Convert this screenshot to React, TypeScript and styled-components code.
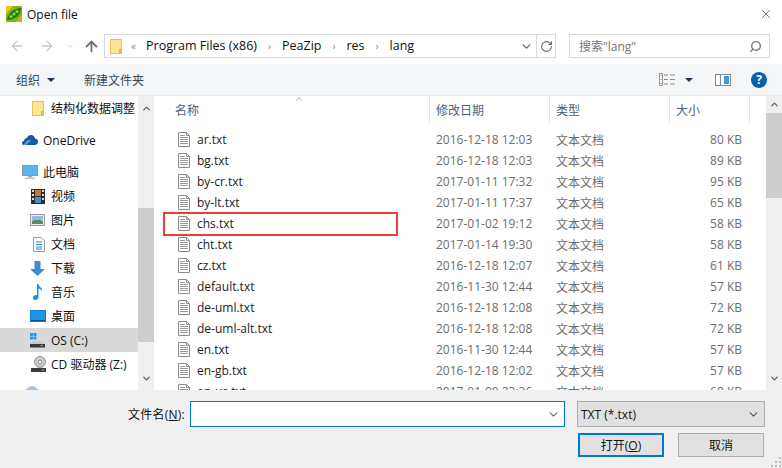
import React from 'react';
import styled, { createGlobalStyle } from 'styled-components';
import {
  ArrowLeft,
  ArrowRight,
  ArrowUp,
  ChevronDown,
  ChevronUp,
  RotateCw,
  Search,
  X,
} from 'lucide-react';

const GlobalStyle = createGlobalStyle`
  html, body {
    margin: 0;
    padding: 0;
    background: #fff;
  }
  * {
    box-sizing: border-box;
  }
`;

const FONT = `"Open Sans", "Noto Sans CJK SC", sans-serif`;

const Window = styled.div`
  width: 782px;
  height: 468px;
  display: flex;
  flex-direction: column;
  overflow: hidden;
  background: #fff;
  font-family: ${FONT};
  font-size: 12px;
  color: #111;
`;

const TitleBar = styled.div`
  height: 28px;
  flex: none;
  display: flex;
  align-items: center;
  padding: 0 9px 0 6px;
  gap: 5px;
`;

const TitleText = styled.span`
  flex: 1;
  font-size: 12px;
`;

const NavBar = styled.div`
  height: 36px;
  flex: none;
  display: flex;
  align-items: center;
  padding: 6px 13px 6px 0;
`;

const NavIcons = styled.div`
  width: 104px;
  flex: none;
  display: flex;
  align-items: center;
`;

const NavSlot = styled.span<{ $width: number; $color: string }>`
  width: ${({ $width }) => $width}px;
  display: flex;
  justify-content: center;
  color: ${({ $color }) => $color};
`;

const AddressBox = styled.div`
  width: 452px;
  height: 24px;
  flex: none;
  display: flex;
  align-items: center;
  border: 1px solid #d9d9d9;
  padding-left: 5px;
`;

const Crumbs = styled.div`
  flex: 1;
  display: flex;
  align-items: center;
  min-width: 0;
  padding-left: 7px;
  gap: 8px;
  font-size: 12.5px;
  margin-top: -1px;
`;

const CrumbSep = styled.span`
  color: #8a8a8a;
  font-size: 10px;
  width: 9px;
  text-align: center;
`;

const AddressDrop = styled.span`
  width: 20px;
  display: flex;
  justify-content: center;
  color: #6a6a6a;
`;

const RefreshBtn = styled.span`
  width: 19px;
  height: 100%;
  display: flex;
  align-items: center;
  justify-content: center;
  border-left: 1px solid #d9d9d9;
  color: #6a6a6a;
`;

const SearchBox = styled.div`
  margin-left: 13px;
  width: 201px;
  height: 24px;
  flex: none;
  display: flex;
  align-items: center;
  justify-content: space-between;
  border: 1px solid #d9d9d9;
  padding: 0 7px 0 9px;
  color: #767676;
`;

const SearchGlass = styled(Search)`
  transform: scaleX(-1);
`;

const Toolbar = styled.div`
  height: 32px;
  flex: none;
  display: flex;
  align-items: center;
  background: #f5f6f7;
  border-bottom: 1px solid #e8e9ea;
  padding: 0 15px 0 16px;
  color: #33475b;
`;

const ToolItem = styled.span`
  display: flex;
  align-items: center;
  gap: 7px;
  margin-right: 29px;
`;

const Caret = styled.span`
  width: 0;
  height: 0;
  border-left: 4px solid transparent;
  border-right: 4px solid transparent;
  border-top: 4px solid #1d3557;
`;

const ViewCaret = styled(Caret)`
  margin: 0 22px 0 10px;
`;

const ToolRight = styled.div`
  margin-left: auto;
  display: flex;
  align-items: center;
`;

const HelpBadge = styled.span`
  width: 16px;
  height: 16px;
  margin-left: 20px;
  border-radius: 50%;
  background: #0a5fb4;
  color: #fff;
  font-weight: 700;
  font-size: 12px;
  display: flex;
  align-items: center;
  justify-content: center;
`;

const Main = styled.div`
  height: 294px;
  flex: none;
  display: flex;
  overflow: hidden;
`;

const Sidebar = styled.div`
  width: 138px;
  flex: none;
  display: flex;
  flex-direction: column;
  overflow: hidden;
`;

const SideItem = styled.div<{ $indent: number; $gap?: number; $active?: boolean }>`
  height: 24px;
  flex: none;
  display: flex;
  align-items: center;
  white-space: nowrap;
  padding-left: ${({ $indent }) => $indent}px;
  margin-top: ${({ $gap }) => $gap ?? 0}px;
  background: ${({ $active }) => ($active ? '#d9d9d9' : 'transparent')};
`;

const SideIcon = styled.span<{ $width: number }>`
  width: ${({ $width }) => $width}px;
  flex: none;
  display: flex;
`;

const ScrollBar = styled.div<{ $width: number }>`
  width: ${({ $width }) => $width}px;
  flex: none;
  background: #f0f0f0;
  display: flex;
  flex-direction: column;
  align-items: center;
  color: #606060;
`;

const ScrollBtn = styled.span<{ $height: number }>`
  height: ${({ $height }) => $height}px;
  flex: none;
  display: flex;
  align-items: center;
  justify-content: center;
`;

const ScrollThumb = styled.div<{ $top: number; $height: number }>`
  width: 100%;
  flex: none;
  height: ${({ $height }) => $height}px;
  margin-top: ${({ $top }) => $top}px;
  background: #cdcdcd;
`;

const ScrollFill = styled.div`
  flex: 1;
`;

const Splitter = styled.div`
  width: 2px;
  flex: none;
`;

const ListPane = styled.div`
  position: relative;
  flex: 1;
  min-width: 0;
  overflow: hidden;
`;

const HeaderRow = styled.div`
  height: 27px;
  margin-bottom: 6px;
  display: grid;
  grid-template-columns: 274px 120px 120px 80px;
  color: #4c607a;
`;

const HeaderCell = styled.div<{ $pad: number }>`
  position: relative;
  display: flex;
  align-items: center;
  padding-left: ${({ $pad }) => $pad}px;
  border-right: 1px solid #e5e5e5;
`;

const SortCaret = styled.span`
  position: absolute;
  top: -2px;
  left: 138px;
  color: #777;
  display: flex;
`;

const FileRow = styled.div`
  height: 21px;
  display: grid;
  grid-template-columns: 274px 120px 120px 80px;
  align-items: center;
  color: #6d6d6d;
`;

const NameCell = styled.div`
  display: flex;
  align-items: center;
  padding-left: 22px;
  gap: 7px;
  color: #1c1c1c;
`;

const MetaCell = styled.div`
  padding-left: 6px;
`;

const SizeCell = styled.div`
  text-align: right;
  padding-right: 8px;
`;

const RedMark = styled.div`
  position: absolute;
  left: 7px;
  top: 116px;
  width: 235px;
  height: 24px;
  border: 2px solid #f03a3a;
`;

const Footer = styled.div`
  position: relative;
  flex: 1;
  background: #f0f0f0;
  display: grid;
  grid-template-columns: 190px 375px 200px;
  grid-template-rows: 26px 24px;
  row-gap: 6px;
  padding-top: 11px;
`;

const FileLabel = styled.label`
  display: flex;
  align-items: center;
  justify-content: flex-end;
  padding-right: 5px;
  letter-spacing: 0.25px;
  color: #111;
`;

const Underlined = styled.span`
  text-decoration: underline;
`;

const FileInput = styled.div`
  display: flex;
  align-items: center;
  justify-content: flex-end;
  background: #fff;
  border: 1px solid #0078d7;
  padding-right: 4px;
  color: #666;
`;

const TypeSelect = styled.div`
  margin-left: 12px;
  display: flex;
  align-items: center;
  justify-content: space-between;
  background: #e1e1e1;
  border: 1px solid #adadad;
  padding: 0 4px 0 3px;
  color: #111;
`;

const ButtonRow = styled.div`
  grid-column: 3;
  margin-left: 13px;
  display: flex;
  gap: 14px;
`;

const DialogButton = styled.button<{ $primary?: boolean }>`
  width: 86px;
  height: 24px;
  flex: none;
  padding: 0;
  font-family: ${FONT};
  font-size: 12px;
  color: #111;
  background: #e1e1e1;
  border: ${({ $primary }) => ($primary ? '2px solid #0078d7' : '1px solid #adadad')};
`;

const Grip = styled.svg`
  position: absolute;
  right: 1px;
  bottom: 1px;
`;

const PeaIcon = () => (
  <svg width="16" height="16" viewBox="0 0 16 16">
    <rect width="16" height="16" rx="1" fill="#7fb800" />
    <path d="M0 0h7L0 8z" fill="#f5c518" />
    <path d="M16 16H9l7-8z" fill="#d9a514" />
    <path d="M1 14C2 7 8 2 15 2c0 7-6 12-14 12z" fill="#1f7a1f" />
    <circle cx="5" cy="10.5" r="1.6" fill="#8ccf3f" />
    <circle cx="8" cy="8" r="1.6" fill="#8ccf3f" />
    <circle cx="11" cy="5.5" r="1.6" fill="#8ccf3f" />
  </svg>
);

const FolderIcon = ({ size = 12 }: { size?: number }) => (
  <svg width={size} height={size * 1.25} viewBox="0 0 12 15">
    <rect x="0.5" y="0.5" width="11" height="14" fill="#fde594" stroke="#e6c25a" />
    <rect x="9" y="10" width="3" height="5" fill="#e6b93f" />
  </svg>
);

const CloudIcon = () => (
  <svg width="16" height="10" viewBox="0 0 16 10">
    <path
      d="M1.5 10C.5 10 0 9 0 8c0-1.300.8-2 2-2 .2-2 1.500-3 3-3 .6-1.800 2-3 4-3 2.300 0 3.700 1.500 4 3.500 1.800 0 3 1 3 3 0 2-1.300 3.500-3 3.500z"
      fill="#0f5ca8"
    />
    <path d="M5 5.500c1.500-1 3-.5 4 .5l-5 4H1.500z" fill="#fff" opacity="0.35" />
  </svg>
);

const PcIcon = () => (
  <svg width="16" height="14" viewBox="0 0 16 14">
    <rect x="0.5" y="0.5" width="15" height="10" fill="#5ab6ee" stroke="#8a9aa8" />
    <rect x="6" y="11" width="4" height="1.500" fill="#9aa7b2" />
    <rect x="3" y="12.500" width="10" height="1.500" fill="#b9c4cc" />
  </svg>
);

const VideoIcon = () => (
  <svg width="14" height="15" viewBox="0 0 14 15">
    <rect width="14" height="15" fill="#2c2c2c" />
    <rect x="4" y="1" width="6" height="6" fill="#c9772c" />
    <rect x="4" y="8" width="6" height="6" fill="#3f8fd1" />
    <path d="M1 1h2v2H1zM1 5h2v2H1zM1 9h2v2H1zM11 1h2v2h-2zM11 5h2v2h-2zM11 9h2v2h-2z" fill="#ddd" />
  </svg>
);

const PictureIcon = () => (
  <svg width="15" height="12" viewBox="0 0 15 12">
    <rect x="0.500" y="0.500" width="14" height="11" fill="#e6eef2" stroke="#9a9a9a" />
    <path d="M2 7c3-2 7-2 11 0v3H2z" fill="#5c8a6a" />
    <rect x="2" y="2" width="11" height="4" fill="#8fbfdd" />
  </svg>
);

const DocIcon = () => (
  <svg width="12" height="15" viewBox="0 0 12 15">
    <path d="M.5.500h8l3 3v11H.5z" fill="#fff" stroke="#9a9a9a" />
    <path d="M3 5h6M3 7.500h6M3 10h6M3 12h6" stroke="#2f7fc4" />
  </svg>
);

const DownloadIcon = () => (
  <svg width="15" height="15" viewBox="0 0 15 15">
    <path d="M4.500 0h6v8H15l-7.500 7L0 8h4.500z" fill="#3f8ad8" />
  </svg>
);

const MusicIcon = () => (
  <svg width="12" height="16" viewBox="0 0 12 16">
    <path d="M5 0h1.500c.3 3 4.500 3.500 3.500 7.500C9.500 5.500 8 5 6.500 4.500V13c0 1.700-1.500 3-3.300 3S1 15 1 13.500 2.800 10.800 5 11z" fill="#1e8fe6" />
  </svg>
);

const DesktopIcon = () => (
  <svg width="16" height="12" viewBox="0 0 16 12">
    <rect width="16" height="12" fill="#1279d6" />
    <rect x="1" y="1" width="14" height="9" fill="#1a95ea" />
    <rect x="1" y="10" width="14" height="1" fill="#0d4f8e" />
  </svg>
);

const DriveIcon = () => (
  <svg width="15" height="15" viewBox="0 0 15 15">
    <rect x="0" y="0" width="3" height="3" fill="#1e9be8" />
    <rect x="3.500" y="0" width="3" height="3" fill="#1e9be8" />
    <rect x="0" y="3.500" width="3" height="3" fill="#1e9be8" />
    <rect x="3.500" y="3.500" width="3" height="3" fill="#1e9be8" />
    <path d="M2 8.500h10l2.500 2.500H0z" fill="#c8c8c8" />
    <rect y="11" width="15" height="3.500" fill="#3a3a3a" />
    <rect x="10.500" y="12" width="2.500" height="1" fill="#59d46a" />
  </svg>
);

const CdIcon = () => (
  <svg width="15" height="16" viewBox="0 0 15 16">
    <circle cx="9" cy="6" r="5.500" fill="#c9c9c9" stroke="#9a9a9a" />
    <circle cx="9" cy="6" r="1.800" fill="#fff" stroke="#8a8a8a" />
    <rect y="12" width="15" height="4" fill="#3a3a3a" />
    <rect x="10.500" y="13.500" width="2.500" height="1" fill="#59d46a" />
  </svg>
);

const NetworkIcon = () => (
  <svg width="14" height="20" viewBox="0 0 14 20">
    <circle cx="7" cy="7" r="6.500" fill="#9cc4e4" stroke="#b5c7d6" />
  </svg>
);

const TxtIcon = () => (
  <svg width="12" height="15" viewBox="0 0 12 15">
    <path d="M.5.500h8l3 3v11H.5z" fill="#fff" stroke="#8c8c8c" />
    <path d="M8.500.500v3h3" fill="none" stroke="#8c8c8c" />
    <path d="M2 3.500h5M2 5.500h8M2 7.500h8M2 9.500h8M2 11.500h8" stroke="#9c9c9c" />
  </svg>
);

const ViewIcon = () => (
  <svg width="16" height="13" viewBox="0 0 16 13">
    <rect x="0.500" y="0.500" width="3" height="12" fill="#fff" stroke="#9a9a9a" />
    <rect x="1.500" y="2" width="1" height="1" fill="#3f8ad8" />
    <rect x="1.500" y="6" width="1" height="1" fill="#3f8ad8" />
    <rect x="1.500" y="10" width="1" height="1" fill="#d83f3f" />
    <path d="M5 2h4M11 2h5M5 6.500h4M11 6.500h5M5 11h4M11 11h5" stroke="#8a8a8a" />
  </svg>
);

const PaneIcon = () => (
  <svg width="16" height="12" viewBox="0 0 16 12">
    <rect x="0.500" y="0.500" width="15" height="11" fill="#fff" stroke="#8a8a8a" />
    <rect x="9" y="2" width="5" height="8" fill="#3f97e8" />
    <rect x="5" y="1" width="1" height="10" fill="#8a8a8a" />
  </svg>
);

const SIDEBAR: {
  label: string;
  icon: React.ReactNode;
  indent: number;
  width: number;
  gap?: number;
  active?: boolean;
}[] = [
  { label: '结构化数据调整', icon: <FolderIcon />, indent: 32, width: 19 },
  { label: 'OneDrive', icon: <CloudIcon />, indent: 22, width: 21, gap: 8 },
  { label: '此电脑', icon: <PcIcon />, indent: 22, width: 21, gap: 8 },
  { label: '视频', icon: <VideoIcon />, indent: 31, width: 20 },
  { label: '图片', icon: <PictureIcon />, indent: 30, width: 21 },
  { label: '文档', icon: <DocIcon />, indent: 33, width: 18 },
  { label: '下载', icon: <DownloadIcon />, indent: 30, width: 21 },
  { label: '音乐', icon: <MusicIcon />, indent: 32, width: 19 },
  { label: '桌面', icon: <DesktopIcon />, indent: 30, width: 21 },
  { label: 'OS (C:)', icon: <DriveIcon />, indent: 30, width: 21, active: true },
  { label: 'CD 驱动器 (Z:)', icon: <CdIcon />, indent: 31, width: 20 },
  { label: '', icon: <NetworkIcon />, indent: 25, width: 20, gap: 8 },
];

const FILES = [
  ['ar.txt', '2016-12-18 12:03', '80 KB'],
  ['bg.txt', '2016-12-18 12:03', '89 KB'],
  ['by-cr.txt', '2017-01-11 17:32', '95 KB'],
  ['by-lt.txt', '2017-01-11 17:37', '65 KB'],
  ['chs.txt', '2017-01-02 19:12', '58 KB'],
  ['cht.txt', '2017-01-14 19:30', '58 KB'],
  ['cz.txt', '2016-12-18 12:07', '61 KB'],
  ['default.txt', '2016-11-30 12:44', '57 KB'],
  ['de-uml.txt', '2016-12-18 12:08', '72 KB'],
  ['de-uml-alt.txt', '2016-12-18 12:08', '72 KB'],
  ['en.txt', '2016-11-30 12:44', '57 KB'],
  ['en-gb.txt', '2016-12-18 12:02', '57 KB'],
  ['en-us.txt', '2017-01-09 23:36', '68 KB'],
];

const App = () => (
  <Window>
    <GlobalStyle />
    <TitleBar>
      <PeaIcon />
      <TitleText>Open file</TitleText>
      <X size={14} strokeWidth={1} color="#111" />
    </TitleBar>
    <NavBar>
      <NavIcons>
        <NavSlot $width={34} $color="#c8c8c8">
          <ArrowLeft size={16} />
        </NavSlot>
        <NavSlot $width={26} $color="#c8c8c8">
          <ArrowRight size={16} />
        </NavSlot>
        <NavSlot $width={20} $color="#d0d0d0">
          <ChevronDown size={10} />
        </NavSlot>
        <NavSlot $width={22} $color="#6d6d6d">
          <ArrowUp size={17} strokeWidth={2.5} />
        </NavSlot>
      </NavIcons>
      <AddressBox>
        <FolderIcon />
        <Crumbs>
          <CrumbSep>«</CrumbSep>
          <span>Program Files (x86)</span>
          <CrumbSep>›</CrumbSep>
          <span>PeaZip</span>
          <CrumbSep>›</CrumbSep>
          <span>res</span>
          <CrumbSep>›</CrumbSep>
          <span>lang</span>
        </Crumbs>
        <AddressDrop>
          <ChevronDown size={13} strokeWidth={2.5} />
        </AddressDrop>
        <RefreshBtn>
          <RotateCw size={13} />
        </RefreshBtn>
      </AddressBox>
      <SearchBox>
        <span>搜索"lang"</span>
        <SearchGlass size={13} strokeWidth={2.5} />
      </SearchBox>
    </NavBar>
    <Toolbar>
      <ToolItem>
        组织
        <Caret />
      </ToolItem>
      <ToolItem>新建文件夹</ToolItem>
      <ToolRight>
        <ViewIcon />
        <ViewCaret />
        <PaneIcon />
        <HelpBadge>?</HelpBadge>
      </ToolRight>
    </Toolbar>
    <Main>
      <Sidebar>
        {SIDEBAR.map((item) => (
          <SideItem
            key={item.label || 'network'}
            $indent={item.indent}
            $gap={item.gap}
            $active={item.active}
          >
            <SideIcon $width={item.width}>{item.icon}</SideIcon>
            {item.label}
          </SideItem>
        ))}
      </Sidebar>
      <ScrollBar $width={16}>
        <ScrollBtn $height={24}>
          <ChevronUp size={11} strokeWidth={3} />
        </ScrollBtn>
        <ScrollThumb $top={88} $height={134} />
        <ScrollFill />
        <ScrollBtn $height={24}>
          <ChevronDown size={11} strokeWidth={3} />
        </ScrollBtn>
      </ScrollBar>
      <Splitter />
      <ListPane>
        <HeaderRow>
          <HeaderCell $pad={19}>
            名称
            <SortCaret>
              <ChevronUp size={10} strokeWidth={1.5} />
            </SortCaret>
          </HeaderCell>
          <HeaderCell $pad={6}>修改日期</HeaderCell>
          <HeaderCell $pad={6}>类型</HeaderCell>
          <HeaderCell $pad={6}>大小</HeaderCell>
        </HeaderRow>
        {FILES.map(([name, date, size]) => (
          <FileRow key={name}>
            <NameCell>
              <TxtIcon />
              {name}
            </NameCell>
            <MetaCell>{date}</MetaCell>
            <MetaCell>文本文档</MetaCell>
            <SizeCell>{size}</SizeCell>
          </FileRow>
        ))}
        <RedMark />
      </ListPane>
      <ScrollBar $width={16}>
        <ScrollBtn $height={17}>
          <ChevronUp size={11} strokeWidth={3} />
        </ScrollBtn>
        <ScrollThumb $top={0} $height={85} />
        <ScrollFill />
        <ScrollBtn $height={24}>
          <ChevronDown size={11} strokeWidth={3} />
        </ScrollBtn>
      </ScrollBar>
    </Main>
    <Footer>
      <FileLabel>
        <span>
          文件名(<Underlined>N</Underlined>):
        </span>
      </FileLabel>
      <FileInput>
        <ChevronDown size={13} />
      </FileInput>
      <TypeSelect>
        TXT (*.txt)
        <ChevronDown size={13} color="#555" />
      </TypeSelect>
      <ButtonRow>
        <DialogButton $primary>
          打开(<Underlined>O</Underlined>)
        </DialogButton>
        <DialogButton>取消</DialogButton>
      </ButtonRow>
      <Grip width="10" height="10" viewBox="0 0 10 10">
        <path d="M8 0h2v2H8zM4 4h2v2H4zM8 4h2v2H8zM0 8h2v2H0zM4 8h2v2H4zM8 8h2v2H8z" fill="#bdbdbd" />
      </Grip>
    </Footer>
  </Window>
);

export default App;
